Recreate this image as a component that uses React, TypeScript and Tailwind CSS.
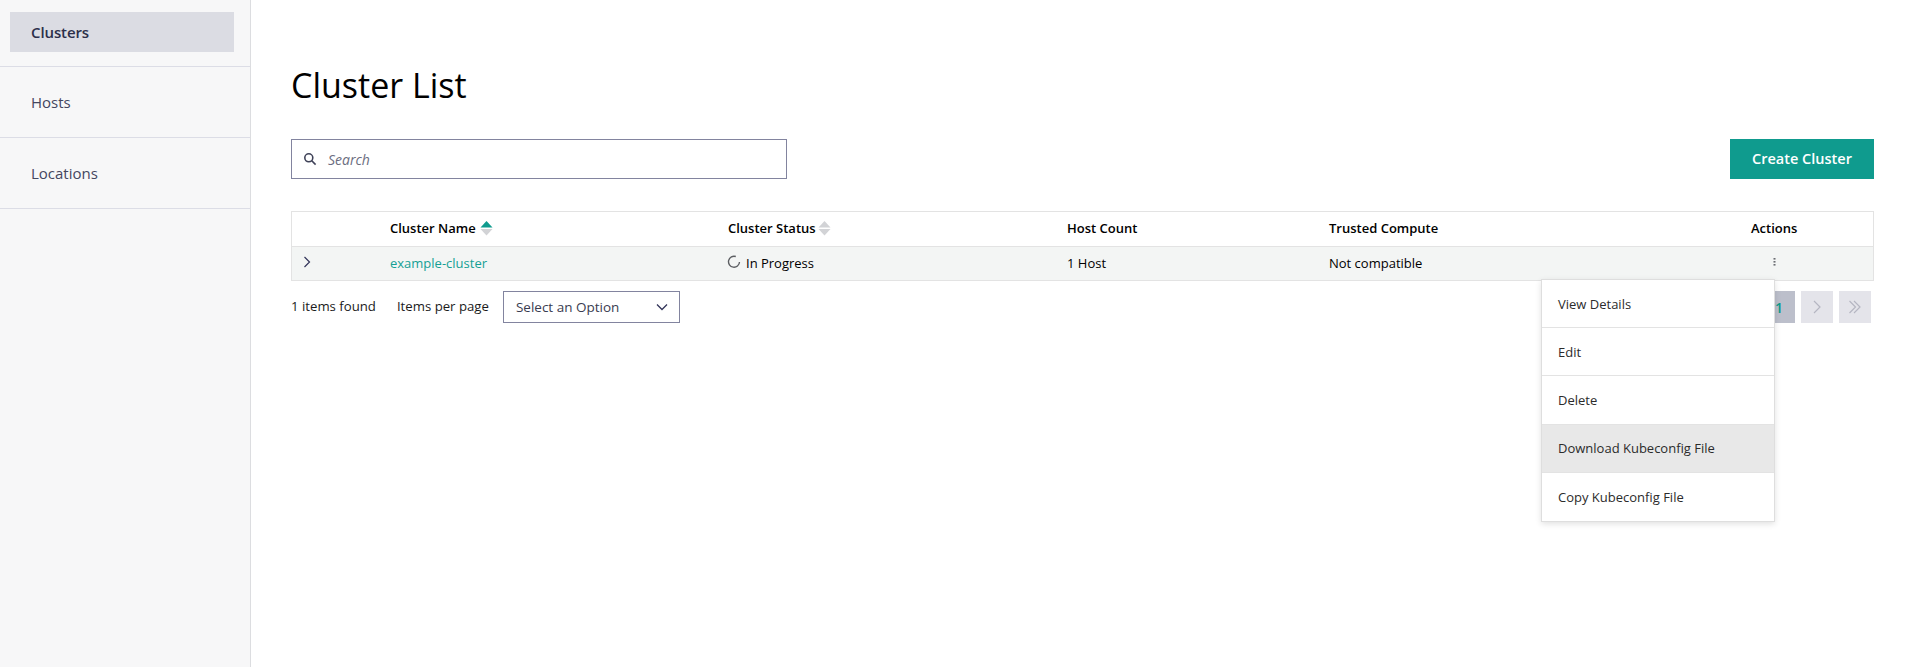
import React from "react";

const font = { fontFamily: '"Open Sans", "Noto Sans", sans-serif' };
const cols = "grid grid-cols-[98px_338px_339px_262px_422px_1fr] items-center";

function SortIcon({ active }: { active?: boolean }) {
  return (
    <svg
      width="13"
      height="17"
      viewBox="0 0 13 17"
      className={"-mt-[2px] shrink-0 " + (active ? "ml-[4px]" : "ml-[2px]")}
    >
      <path d="M6.5 1 L12.5 7.5 H0.5 Z" fill={active ? "#0f9b8e" : "#d2d3d6"} />
      <path d="M0.5 9 H12.5 L6.5 15.5 Z" fill="#d2d3d6" />
    </svg>
  );
}

function Nav({ label, active }: { label: string; active?: boolean }) {
  return (
    <div className="h-[71px] border-b border-[#dcdde6] pl-[10px] pr-[16px] pt-[12px] first:h-[67px]">
      <div
        className={
          active
            ? "flex h-[40px] items-center bg-[#dbdce3] px-[21px] text-[15px] font-semibold tracking-[-0.1px] text-[#2c2f4a]"
            : "mt-[3px] flex h-[40px] items-center px-[21px] text-[15px] text-[#44465f]"
        }
      >
        {label}
      </div>
    </div>
  );
}

function MenuItem({ label, hover, last }: { label: string; hover?: boolean; last?: boolean }) {
  return (
    <div
      className={
        "flex h-[48.2px] items-center px-[16px] pt-[2px] text-[13px] text-[#2b2b2b] " +
        (last ? "" : "border-b border-[#e3e3e3] ") +
        (hover ? "bg-[#e8e8e8]" : "bg-white")
      }
    >
      {label}
    </div>
  );
}

export default function App() {
  return (
    <div style={font} className="flex h-[667px] w-[1907px] overflow-hidden bg-white text-black">
      <aside className="h-full w-[251px] shrink-0 border-r border-[#dcdde0] bg-[#f7f7f8]">
        <Nav label="Clusters" active />
        <Nav label="Hosts" />
        <Nav label="Locations" />
      </aside>
      <main className="min-w-0 flex-1 pl-[40px] pr-[33px] pt-[59px]">
        <h1 className="h-[52px] text-[34px] leading-[52px] font-normal text-black">Cluster List</h1>
        <div className="mt-[28px] flex items-start justify-between">
          <div className="flex h-[40px] w-[496px] items-center border border-[#82849f] pl-[11px]">
            <svg width="14" height="14" viewBox="0 0 14 14" fill="none" stroke="#3f4258" strokeWidth="1.6">
              <circle cx="5.8" cy="5.8" r="4" />
              <path d="M8.8 8.8 L12.6 12.6" />
            </svg>
            <span className="ml-[11px] text-[14px] italic text-[#6b6d80]">Search</span>
          </div>
          <button className="h-[40px] w-[144px] bg-[#0f9b8e] text-[14.5px] font-semibold text-white">
            Create Cluster
          </button>
        </div>
        <div className="relative mt-[32px] w-[1583px]">
          <div className="border border-[#e3e3e3]">
            <div className={cols + " h-[35px] border-b border-[#e3e3e3] bg-white text-[13px] font-semibold"}>
              <div />
              <div className="flex items-center">Cluster Name<SortIcon active /></div>
              <div className="flex items-center">Cluster Status<SortIcon /></div>
              <div>Host Count</div>
              <div>Trusted Compute</div>
              <div>Actions</div>
            </div>
            <div className={cols + " h-[33px] bg-[#f3f5f4] text-[13px]"}>
              <div className="pl-[10px]">
                <svg width="10" height="12" viewBox="0 0 10 12" fill="none" stroke="#33355a" strokeWidth="1.2" className="-mt-[3px]">
                  <path d="M2.5 1 L7.5 6 L2.5 11" />
                </svg>
              </div>
              <div className="text-[#14a094]">example-cluster</div>
              <div className="flex items-center">
                <svg width="14" height="14" viewBox="0 0 14 14" fill="none" stroke="#5c5e62" strokeWidth="1.4" className="-ml-[1px] mr-[5px] -mt-[3px]">
                  <path d="M8.8 1.5 A5.5 5.5 0 1 0 12.5 7" />
                </svg>
                In Progress
              </div>
              <div>1 Host</div>
              <div>Not compatible</div>
              <div className="pl-[22px]">
                <svg width="3" height="8" viewBox="0 0 3 8" fill="#6b6d72" className="-mt-[4px]">
                  <rect x="0.5" y="0" width="2" height="1.6" />
                  <rect x="0.5" y="3" width="2" height="1.6" />
                  <rect x="0.5" y="6" width="2" height="1.6" />
                </svg>
              </div>
            </div>
          </div>
          <div className="mt-[10px] flex items-center text-[13.2px]">
            <span className="text-[#1b1b1b]">1 items found</span>
            <span className="ml-[21px] text-[#1b1b1b]">Items per page</span>
            <div className="ml-[14px] flex h-[32px] w-[177px] items-center justify-between border border-[#82849f] pl-[12px] pr-[11px] text-[13.5px] text-[#3a3c50]">
              Select an Option
              <svg width="12" height="8" viewBox="0 0 12 8" fill="none" stroke="#33355a" strokeWidth="1.3">
                <path d="M1 1.5 L6 6.5 L11 1.5" />
              </svg>
            </div>
            <div className="ml-auto mr-[3px] flex items-center">
              <div className="flex h-[32px] w-[32px] items-center justify-center bg-[#bcbfcb] text-[14px] font-semibold text-[#0f9b8e]">1</div>
              <div className="ml-[6px] flex h-[32px] w-[32px] items-center justify-center bg-[#e4e4ea]">
                <svg width="10" height="14" viewBox="0 0 10 14" fill="none" stroke="#b5b6c2" strokeWidth="1.2">
                  <path d="M2 1 L8 7 L2 13" />
                </svg>
              </div>
              <div className="ml-[6px] flex h-[32px] w-[32px] items-center justify-center bg-[#e4e4ea]">
                <svg width="14" height="14" viewBox="0 0 14 14" fill="none" stroke="#b5b6c2" strokeWidth="1.2">
                  <path d="M1.5 1 L7.5 7 L1.5 13 M6 1 L12 7 L6 13" />
                </svg>
              </div>
            </div>
          </div>
          <div className="absolute left-[1250px] top-[68px] w-[234px] border border-[#dedede] bg-white shadow-[0_2px_6px_rgba(0,0,0,0.12)]">
            <MenuItem label="View Details" />
            <MenuItem label="Edit" />
            <MenuItem label="Delete" />
            <MenuItem label="Download Kubeconfig File" hover />
            <MenuItem label="Copy Kubeconfig File" last />
          </div>
        </div>
      </main>
    </div>
  );
}
